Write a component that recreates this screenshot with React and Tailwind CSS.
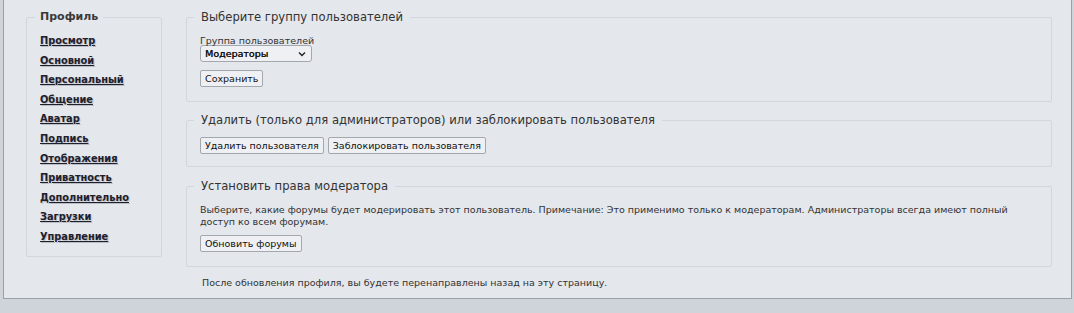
import React from "react";

const links = [
  "Просмотр",
  "Основной",
  "Персональный",
  "Общение",
  "Аватар",
  "Подпись",
  "Отображения",
  "Приватность",
  "Дополнительно",
  "Загрузки",
  "Управление",
];

const btn =
  "h-[17px] px-[4px] text-[9.5px] leading-[15px] text-[#111] bg-[#eef0f3] border border-[#a3a7ae] rounded-[2px] font-['DejaVu_Sans',sans-serif]";

const legend = "ml-[7px] px-[7px] text-[11.6px] leading-[14px] text-[#333]";

export default function App() {
  return (
    <div className="w-[1074px] h-[313px] bg-[#cfd3da] font-['DejaVu_Sans',sans-serif] text-[#333]">
      <div className="ml-[3px] w-[1069px] h-[299px] bg-[#e4e7ec] border-l border-r border-b border-[#9ca1a9] flex pl-[22px] pt-[10px]">
        <fieldset className="w-[136px] h-[247px] border border-[#d3d7dd] rounded-[2px]">
          <legend className="ml-[8px] px-[5px] text-[11px] leading-[14px] font-bold text-[#3a3a3a]">
            Профиль
          </legend>
          <ul className="flex flex-col pl-[13px] pt-[5px]">
            {links.map((l) => (
              <li key={l} className="h-[19.6px] leading-[19.6px]">
                <a
                  href="#"
                  className="text-[9.8px] font-bold text-[#20202c] underline [text-shadow:1px_1px_1px_#b8bcc4]"
                >
                  {l}
                </a>
              </li>
            ))}
          </ul>
        </fieldset>

        <div className="ml-[24px] w-[866px] flex flex-col">
          <fieldset className="h-[92px] border border-[#d3d7dd] rounded-[2px]">
            <legend className={legend}>Выберите группу пользователей</legend>
            <div className="pl-[13px]">
              <div className="mt-[11px] text-[9.5px] leading-[12px] text-[#333]">Группа пользователей</div>
              <div className="mt-[-2px] w-[112px] h-[17px] bg-[#eef0f3] border border-[#a3a7ae] rounded-[3px] flex items-center justify-between pl-[4px] pr-[5px]">
                <span className="text-[9.5px] leading-[15px] text-[#111] [text-shadow:0.3px_0_0_#111]">Модераторы</span>
                <svg width="8" height="6" viewBox="0 0 8 6">
                  <path d="M1 1.5 L4 4.5 L7 1.5" fill="none" stroke="#222" strokeWidth="1.4" />
                </svg>
              </div>
              <div className="mt-[8px] flex">
                <button className={btn}>Сохранить</button>
              </div>
            </div>
          </fieldset>

          <fieldset className="mt-[11px] h-[54px] border border-[#d3d7dd] rounded-[2px]">
            <legend className={legend}>
              Удалить (только для администраторов) или заблокировать пользователя
            </legend>
            <div className="pl-[13px] mt-[10px] flex gap-[4px]">
              <button className={btn}>Удалить пользователя</button>
              <button className={btn}>Заблокировать пользователя</button>
            </div>
          </fieldset>

          <fieldset className="mt-[12px] h-[88px] border border-[#d3d7dd] rounded-[2px]">
            <legend className={legend}>Установить права модератора</legend>
            <div className="pl-[13px] pr-[20px]">
              <p className="mt-[11px] text-[9.5px] leading-[12px] text-[#333]">
                Выберите, какие форумы будет модерировать этот пользователь. Примечание: Это применимо только к модераторам. Администраторы всегда имеют полный доступ ко всем форумам.
              </p>
              <div className="mt-[7px] flex">
                <button className={btn}>Обновить форумы</button>
              </div>
            </div>
          </fieldset>

          <div className="mt-[10px] pl-[16px] text-[9.5px] leading-[12px] text-[#333]">
            После обновления профиля, вы будете перенаправлены назад на эту страницу.
          </div>
        </div>
      </div>
    </div>
  );
}
